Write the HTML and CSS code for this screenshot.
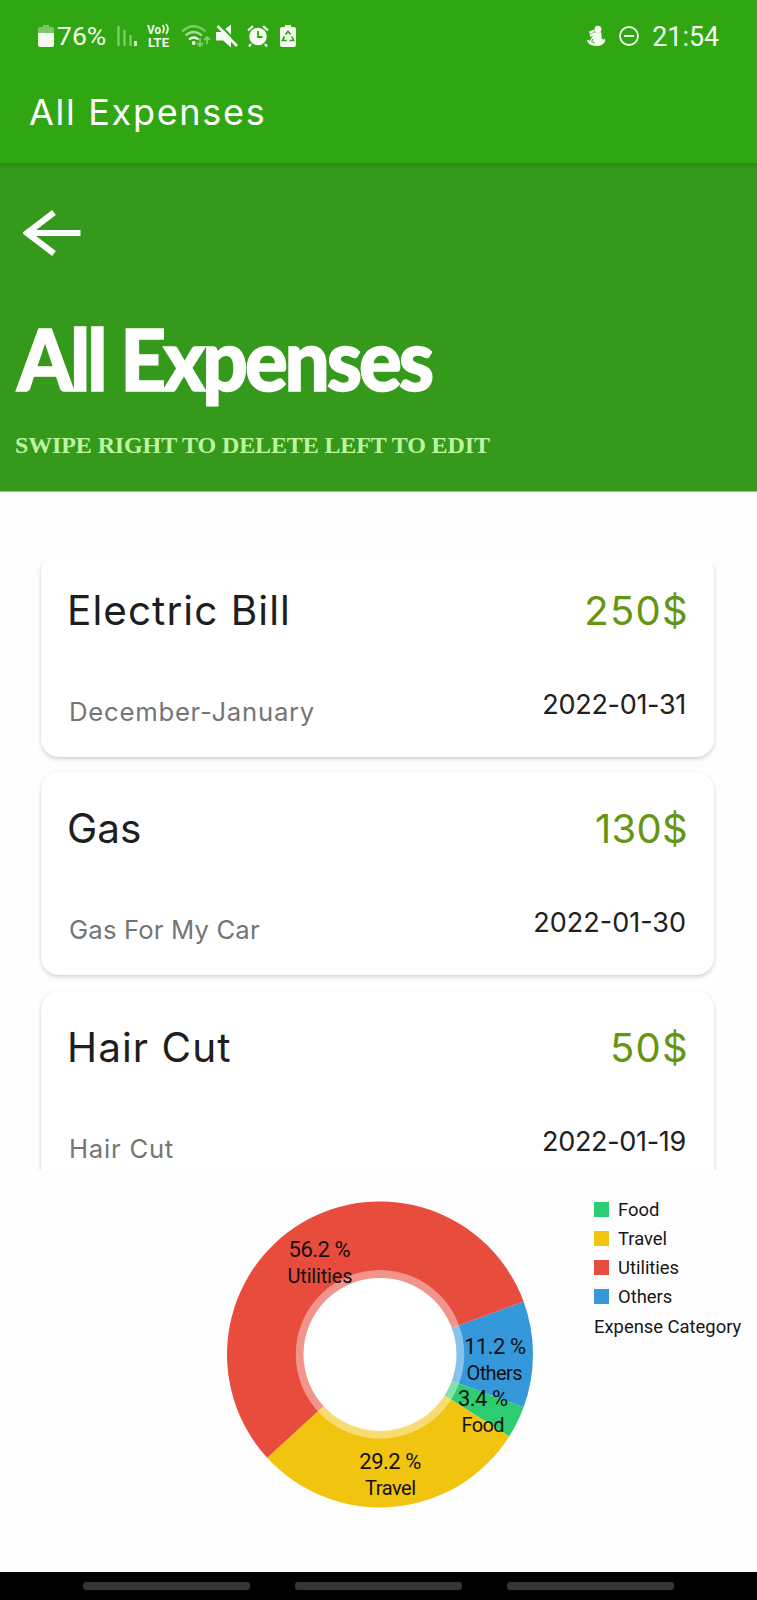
FILE: index.html
```html
<!DOCTYPE html>
<html lang="en">
<head>
<meta charset="utf-8">
<title>All Expenses</title>
<link rel="stylesheet" href="styles.css">
</head>
<body>
<div class="screen">
  <header class="top">
    <div class="status">
      <div class="status-left">
        <svg class="i-battery" width="16" height="24" viewBox="0 0 16 24"><path d="M5 1h6v2h3a2 2 0 0 1 2 2v5H0V5a2 2 0 0 1 2-2h3z" fill="#7cc868"/><path d="M0 9h16v12a2 2 0 0 1-2 2H2a2 2 0 0 1-2-2z" fill="#f4fbf1"/></svg>
        <span class="pct">76%</span>
        <svg class="i-signal" width="20" height="22" viewBox="0 0 20 22"><path d="M1.500 1v20M7.500 5v16M13.500 10v11" stroke="#80cb6d" stroke-width="2.400"/><path d="M18.500 16v5" stroke="#f0faec" stroke-width="2.600"/></svg>
        <svg class="i-volte" width="24" height="30" viewBox="0 -3 24 30"><text class="volte" x="0" y="9.500" textLength="14" lengthAdjust="spacingAndGlyphs">Vo</text><path d="M15.500 1q3 3.800 0 8M19 0q3.800 4.700 0 10" fill="none" stroke="#effaec" stroke-width="1.700"/><text class="volte" x="1" y="22.500" textLength="21" lengthAdjust="spacingAndGlyphs">LTE</text></svg>
        <svg class="i-wifi" width="30" height="24" viewBox="0 0 30 24"><g fill="none" stroke-width="2.200"><path d="M1 7.500Q12.500-3 24.500 7.500" stroke="#80cb6d"/><path d="M4.500 11.500q8-7 16.500 0" stroke="#a9dc9b"/><path d="M8 15.500q4.700-4 9.500 0" stroke="#f4fbf1"/></g><circle cx="12.700" cy="19" r="1.900" fill="#f4fbf1"/><path d="M19 14v8M16 19l3 3 3-3M26 20v-7M23 16l3-3 3 3" fill="none" stroke="#80cb6d" stroke-width="1.800"/></svg>
        <svg class="i-mute" width="22" height="24" viewBox="0 0 22 24"><path d="M0 8h5l10-7.500v23L7 16.500H0z" fill="#f4fbf1"/><path d="M3.500 .5l20 20" stroke="#31a613" stroke-width="2"/><path d="M1.500 2l19.500 20" stroke="#f4fbf1" stroke-width="2.600"/></svg>
        <svg class="i-alarm" width="22" height="24" viewBox="0 0 22 24"><path d="M1 6.500l5-4.500M21 6.500l-5-4.500M4 20l-2 2.500M18 20l2 2.500" stroke="#f4fbf1" stroke-width="2.200"/><circle cx="11" cy="12.500" r="8.800" fill="#f4fbf1"/><path d="M11 7v6h4.500" fill="none" stroke="#31a613" stroke-width="1.800"/></svg>
        <svg class="i-recycle" width="16" height="24" viewBox="0 0 16 24"><path d="M5 1h6v2h3a2 2 0 0 1 2 2v16a2 2 0 0 1-2 2H2a2 2 0 0 1-2-2V5a2 2 0 0 1 2-2h3z" fill="#f4fbf1"/><path d="M5.500 10.500L8 7.300l2.500 3.200M12 12.500l1.500 4H9.500M6.800 16.500H2.500l2-4" fill="none" stroke="#31a613" stroke-width="1.700"/></svg>
      </div>
      <div class="status-right">
        <svg class="i-app" width="19" height="22" viewBox="0 0 20 22"><circle cx="11.500" cy="4" r="3.700" fill="#f4fbf1"/><path d="M9 7h6l.5 7 2.500 1 1-2v4q-3 4.500-8.500 4.500Q4 21.500 1 18l-1-3 3 1 3-5-3 1V9z" fill="#f4fbf1"/><path d="M2.500 7.500l5-2" stroke="#f4fbf1" stroke-width="2.500"/><path d="M6 14l-1 3 3 1" fill="none" stroke="#31a613"/></svg>
        <svg class="i-dnd" width="20" height="20" viewBox="0 0 20 20"><circle cx="10" cy="10" r="9" fill="none" stroke="#f0faec" stroke-width="1.800"/><path d="M5 10h10" stroke="#f0faec" stroke-width="1.900"/></svg>
        <span class="clock">21:54</span>
      </div>
    </div>
    <div class="app-title"><span>All Expenses</span></div>
  </header>
  <section class="hero">
    <svg class="back" width="58" height="46" viewBox="0 0 58 46"><path d="M31 2.500L4 23l27 20.500M4 23h53.500" fill="none" stroke="#fff" stroke-width="6"/></svg>
    <h1>All Expenses</h1>
    <p>SWIPE RIGHT TO DELETE LEFT TO EDIT</p>
  </section>
  <main class="list">
    <article class="card c1">
      <div class="row"><span class="name">Electric Bill</span><span class="amount">250$</span></div>
      <div class="row meta"><span class="note">December-January</span><span class="date">2022-01-31</span></div>
    </article>
    <article class="card c2">
      <div class="row"><span class="name">Gas</span><span class="amount">130$</span></div>
      <div class="row meta"><span class="note">Gas For My Car</span><span class="date">2022-01-30</span></div>
    </article>
    <article class="card c3">
      <div class="row"><span class="name">Hair Cut</span><span class="amount">50$</span></div>
      <div class="row meta"><span class="note">Hair Cut</span><span class="date">2022-01-19</span></div>
    </article>
  </main>
  <section class="chart">
    <svg class="donut" width="320" height="320" viewBox="-160 -160.400 320 320">
      <path fill="#3498db" d="M0 0L143.600-52.800A153 153 0 0 1 143.600 52.800Z"/>
      <path fill="#2ecc71" d="M0 0L143.600 52.800A153 153 0 0 1 129.200 82Z"/>
      <path fill="#f1c40f" d="M0 0L129.200 82A153 153 0 0 1-112.800 103.400Z"/>
      <path fill="#e74c3c" d="M0 0L-112.800 103.400A153 153 0 1 1 143.600-52.800Z"/>
      <circle r="84.300" fill="#fff" fill-opacity=".41"/>
      <circle r="76.500" fill="#fff"/>
      <g class="slice-pct">
        <text x="-60.500" y="-97.500" textLength="62">56.2 %</text>
        <text x="115" y="0" textLength="62">11.2 %</text>
        <text x="103" y="51.500" textLength="50">3.4 %</text>
        <text x="10.300" y="115" textLength="62">29.2 %</text>
      </g>
      <g class="slice-name">
        <text x="-60" y="-71.500" textLength="65">Utilities</text>
        <text x="114.500" y="26" textLength="56">Others</text>
        <text x="103" y="77.500" textLength="43">Food</text>
        <text x="10.500" y="141" textLength="51">Travel</text>
      </g>
    </svg>
    <div class="legend">
      <div class="entry"><i class="food"></i>Food</div>
      <div class="entry"><i class="travel"></i>Travel</div>
      <div class="entry"><i class="utilities"></i>Utilities</div>
      <div class="entry"><i class="others"></i>Others</div>
      <div class="caption">Expense Category</div>
    </div>
  </section>
  <footer class="nav"><span></span><span></span><span></span></footer>
</div>
</body>
</html>
```
FILE: styles.css
```css
* { box-sizing: border-box; }
body { margin: 0; background: #fff; }
.screen { width: 757px; height: 1600px; display: flex; flex-direction: column; overflow: hidden; background: #fefefe; }
.screen > * { flex-shrink: 0; }

.top { height: 163px; background: #31a613; color: #fff; }
.status { height: 72px; display: flex; justify-content: space-between; padding: 0 38px 0 38px; font: 26px/72px Roboto, sans-serif; color: #f4fbf1; }
.status-left, .status-right { display: flex; align-items: center; white-space: nowrap; }
.pct { margin-left: 3px; width: 50px; font-size: 26.500px; }
.i-signal { margin-left: 10px; }
.i-volte { margin-left: 10px; }
.i-wifi { margin-left: 10px; }
.i-mute { margin-left: 5px; }
.i-alarm { margin-left: 9px; }
.i-recycle { margin-left: 11px; }
.i-dnd { margin: 0 13px 0 13px; }
.clock { font-size: 26.800px; padding-top: 1px; }
.volte { font: bold 12.500px Roboto, sans-serif; fill: #effaec; }

.app-title { padding-left: 29px; font: 36px/80px Inter, sans-serif; letter-spacing: 1.700px; }

.hero { height: 329px; background: #35991b; background-image: linear-gradient(#2f8a19, #35991b 7px); padding: 47px 15px 0; border-bottom: 1px solid #9acb8d; }
.back { display: block; margin-left: 8px; }
.hero h1 { margin: 52px 0 0 2px; font: 900 85px/100px Lato, sans-serif; letter-spacing: -3.300px; color: #fff; white-space: nowrap; -webkit-text-stroke: 1.500px #fff; transform: scaleX(.94); transform-origin: 0 50%; }
.hero p { margin: 21px 0 0; font: bold 24px/32px "Liberation Serif", serif; color: #bdf5a0; white-space: nowrap; letter-spacing: -.12px; }

.list { height: 608px; margin-top: 70px; padding: 0 43px 0 41px; overflow: hidden; font-family: Inter, sans-serif; }
.card { height: 203px; margin-bottom: 15.300px; padding: 32px 27px 0 26px; border-radius: 18px; background: #fff; box-shadow: 0 2px 4px rgba(0,0,0,.18); }
.c1 { margin-top: -8px; }
.row { display: flex; justify-content: space-between; line-height: 50px; white-space: nowrap; }
.name { font-size: 40.500px; color: #1e1e1e; letter-spacing: 1.050px; }
.amount { font-size: 40px; color: #649614; letter-spacing: 1.300px; margin-right: -2px; }
.meta { margin-top: 49px; line-height: 40px; }
.note { font-size: 25.700px; color: #757575; padding: 7px 0 0 2px; letter-spacing: .75px; }
.date { font-size: 27px; color: #202020; letter-spacing: -.3px; margin-right: 1px; }
.c2 .name { letter-spacing: 0; }
.c2 .amount { letter-spacing: .3px; margin-right: -1px; }
.c2 .note { letter-spacing: .15px; }
.c2 .date { letter-spacing: 0; }

.chart { height: 402px; display: flex; padding: 24px 0 0 220px; font-family: Roboto, sans-serif; }
.slice-pct text { font-size: 22px; text-anchor: middle; fill: #111; }
.slice-name text { font-size: 20px; text-anchor: middle; fill: #111; }
.legend { margin-left: 54px; padding-top: 1px; font-size: 18.400px; line-height: 29px; color: #161616; white-space: nowrap; }
.entry { display: flex; align-items: center; }
.entry i { width: 15px; height: 15px; margin-right: 9px; }
.food { background: #2ecc71; }
.travel { background: #f1c40f; }
.utilities { background: #e74c3c; }
.others { background: #3498db; }
.caption { padding-top: 1px; }

.nav { height: 28px; background: #000; display: flex; gap: 45px; padding: 10px 0 0 83px; }
.nav span { width: 167px; height: 8px; border-radius: 3px; background: #353535; }
```
